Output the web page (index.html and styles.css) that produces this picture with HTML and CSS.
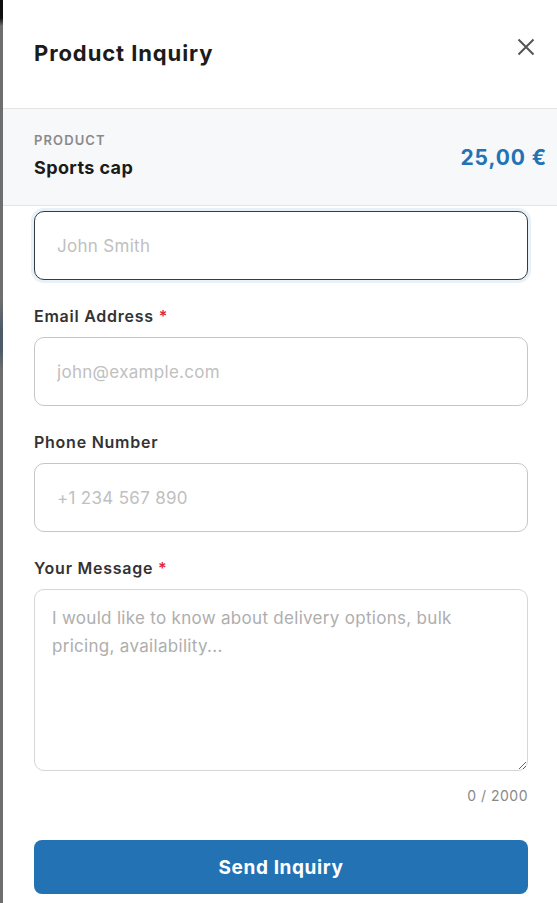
FILE: index.html
```html
<!DOCTYPE html>
<html lang="en">
<head>
<meta charset="utf-8">
<title>Product Inquiry</title>
<link rel="stylesheet" href="styles.css">
</head>
<body>
<div class="screen">
  <div class="backdrop"></div>
  <div class="panel">
    <header class="panel-header">
      <h1 class="title">Product Inquiry</h1>
      <button class="close" type="button" aria-label="Close">
        <svg width="18" height="18" viewBox="0 0 18 18"><path d="M1.5 1.5 L16.5 16.5 M16.5 1.5 L1.5 16.5" stroke="#555" stroke-width="2" fill="none"/></svg>
      </button>
    </header>
    <section class="product">
      <div class="product-info">
        <div class="product-label">PRODUCT</div>
        <div class="product-name">Sports cap</div>
      </div>
      <div class="product-price">25,00 €</div>
    </section>
    <form class="form">
      <input class="input input-focus" type="text" placeholder="John Smith" autofocus>
      <label class="label">Email Address <span class="req">*</span></label>
      <input class="input" type="email" placeholder="john@example.com">
      <label class="label">Phone Number</label>
      <input class="input" type="tel" placeholder="+1 234 567 890">
      <label class="label">Your Message <span class="req">*</span></label>
      <textarea class="textarea" placeholder="I would like to know about delivery options, bulk pricing, availability..."></textarea>
      <div class="counter">0 / 2000</div>
      <button class="submit" type="button">Send Inquiry</button>
    </form>
  </div>
</div>
</body>
</html>
```
FILE: styles.css
```css
* { box-sizing: border-box; }
html, body { margin: 0; padding: 0; height: 100%; overflow: hidden; }
body { font-family: "Inter", "Noto Sans", sans-serif; background: #fff; }
.screen { display: flex; height: 903px; }
.backdrop {
  width: 3px; flex: none;
  background: linear-gradient(to bottom, #0c0e10 0, #111 18px, #6e6e6e 26px, #6e6e6e 300px, #4d5b69 330px, #4d5b69 350px, #6e6e6e 370px, #6e6e6e 100%);
}
.panel { flex: 1; display: flex; flex-direction: column; background: #fff; overflow: hidden; }
.panel-header {
  height: 109px; flex: none;
  display: flex; align-items: center; justify-content: space-between;
  padding: 0 22px 0 31px;
  border-bottom: 1px solid #e4e4e4;
}
.title { margin: 0; font-size: 22px; font-weight: 700; color: #1b1b1b; letter-spacing: 0.9px; position: relative; top: -1px; }
.close { border: 0; background: none; padding: 0; width: 18px; height: 18px; display: flex; margin-top: -14px; }
.product {
  height: 97px; flex: none;
  display: flex; align-items: center; justify-content: space-between;
  padding: 0 10px 0 31px;
  background: #f7f8fa;
  border-bottom: 1px solid #e4e4e4;
}
.product-info { margin-bottom: 4px; }
.product-label { font-size: 13px; font-weight: 600; color: #8a8a8a; letter-spacing: 1.1px; line-height: 16px; }
.product-name { font-size: 18px; font-weight: 700; color: #1b1b1b; line-height: 22px; margin-top: 9px; letter-spacing: 0.4px; }
.product-price { font-size: 21px; font-weight: 700; color: #2272b4; letter-spacing: 0.9px; }
.form { display: flex; flex-direction: column; padding: 5px 29px 0 31px; }
.input {
  height: 69px; width: 100%;
  border: 1px solid #c6c6c6; border-radius: 10px;
  padding: 0 22px; font-family: inherit; font-size: 17px; letter-spacing: 0.3px; color: #333;
  background: #fff; outline: none;
}
.input::placeholder { color: #c0c0c0; }
.textarea::placeholder { color: #aeaeae; }
.input-focus { border-color: #363b40; box-shadow: 0 0 0 3px #e8f0f8; }
.label { margin: 25px 0 10px; font-size: 16px; font-weight: 600; color: #333; line-height: 22px; letter-spacing: 0.75px; }
.req { color: #e0283c; }
.textarea {
  height: 182px; width: 100%; resize: vertical;
  border: 1px solid #d6d6d6; border-radius: 10px;
  padding: 14px 17px; font-family: inherit; font-size: 17px; line-height: 28px; letter-spacing: 0.3px; color: #333;
  outline: none;
}
.counter { text-align: right; font-size: 14px; color: #888; margin-top: 16px; line-height: 18px; letter-spacing: 0.5px; }
.submit {
  margin-top: 35px; height: 54px; width: 100%;
  border: 0; border-radius: 8px; background: #2272b4; color: #fff;
  font-family: inherit; font-size: 19px; font-weight: 700; letter-spacing: 0.6px;
}
```
